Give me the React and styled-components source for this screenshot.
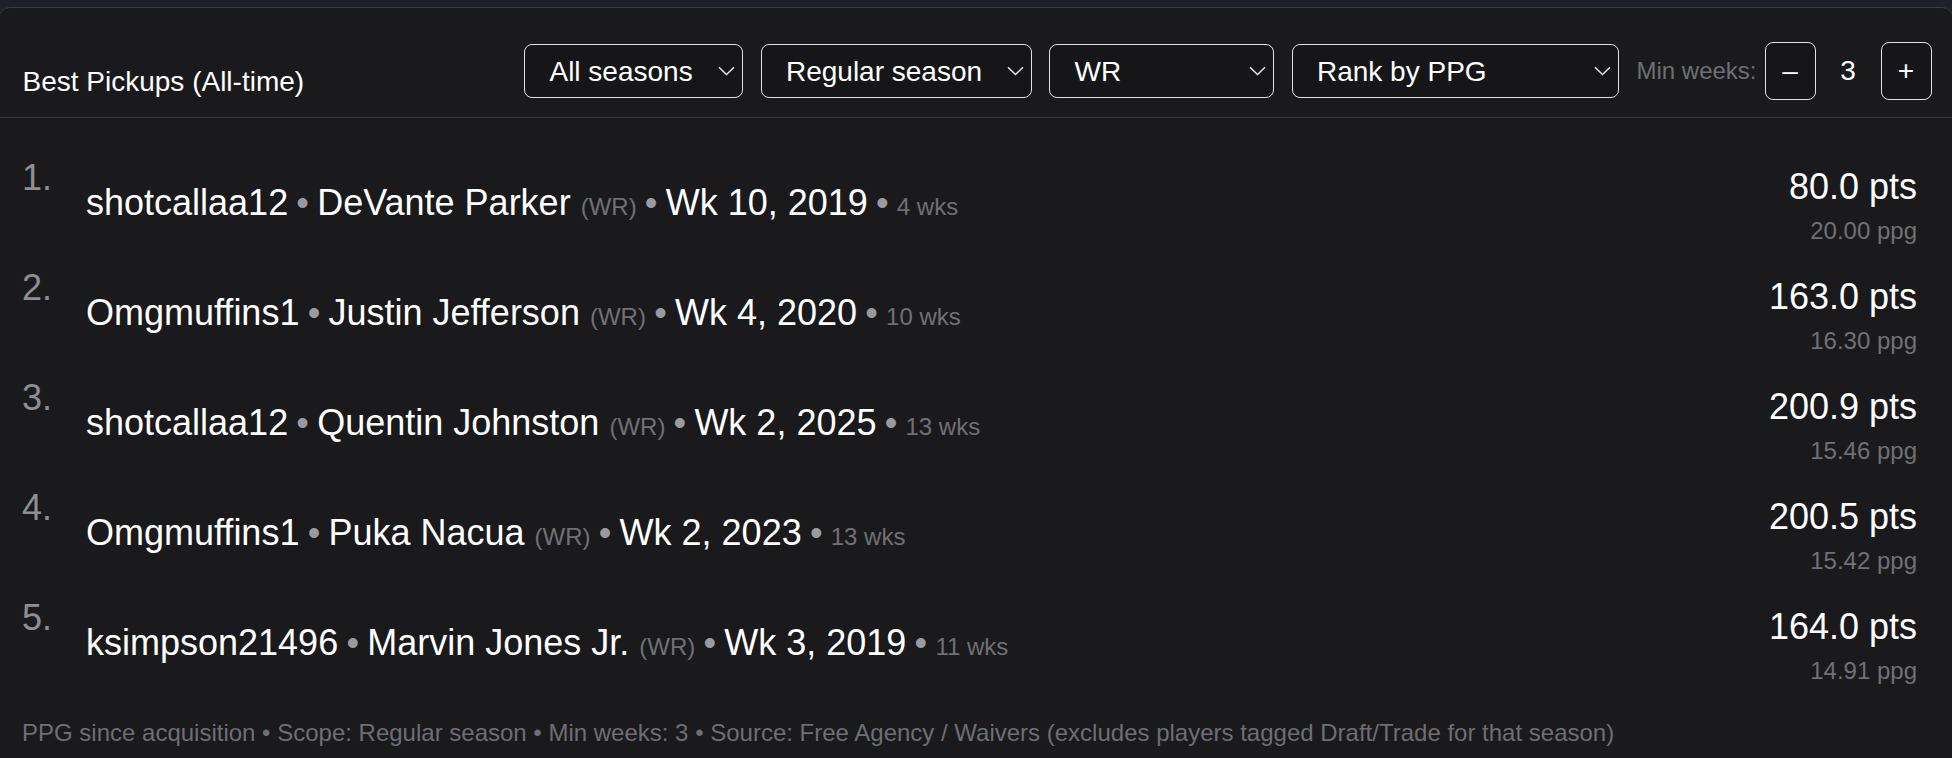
import React from "react";
import styled, { createGlobalStyle } from "styled-components";

const GlobalStyle = createGlobalStyle`
  html, body {
    margin: 0;
    padding: 0;
    height: 100%;
    overflow: hidden;
    background: #1e2129;
  }
  body {
    font-family: "Liberation Sans", Arial, sans-serif;
  }
  #root { height: 100%; }
`;

const Page = styled.div`
  padding-top: 7px;
`;

const Card = styled.section`
  margin: 0 -2px;
  min-height: 820px;
  background: #1a1a1c;
  border: 1px solid #3c3c41;
  border-radius: 12px;
  color: #ffffff;
`;

const Header = styled.header`
  display: flex;
  align-items: center;
  justify-content: space-between;
  padding: 34px 21.5px 17px 23.5px;
  border-bottom: 1px solid #3a3a3f;
`;

const Title = styled.h2`
  margin: 22px 0 0;
  font-size: 28px;
  line-height: 32px;
  font-weight: 400;
  color: #ffffff;
`;

const Controls = styled.div`
  display: flex;
  align-items: center;
  gap: 17.5px;
`;

const SelectWrap = styled.div`
  position: relative;
  width: ${(p) => p.$w}px;
`;

const Select = styled.select`
  appearance: none;
  -webkit-appearance: none;
  display: block;
  width: 100%;
  height: 54px;
  margin: 0;
  padding: 0 34px 0 24px;
  background: #161618;
  color: #ffffff;
  border: 1px solid #e2e2e2;
  border-radius: 8px;
  font-family: inherit;
  font-size: 28px;
  outline: none;
`;

const Chevron = styled.svg`
  position: absolute;
  right: 8px;
  top: 50%;
  margin-top: -5px;
  width: 17px;
  height: 10px;
  pointer-events: none;
`;

const Stepper = styled.div`
  display: flex;
  align-items: center;
  gap: 8px;
`;

const StepLabel = styled.span`
  font-size: 24px;
  color: #6e6e73;
`;

const StepButton = styled.button`
  width: 51px;
  height: 58px;
  display: flex;
  align-items: center;
  justify-content: center;
  padding: 0;
  background: #161618;
  color: #ffffff;
  border: 1px solid #e2e2e2;
  border-radius: 8px;
  font-family: inherit;
  font-size: 28px;
  cursor: pointer;
`;

const StepValue = styled.span`
  width: 49px;
  text-align: center;
  font-size: 28px;
  color: #ffffff;
`;

const List = styled.ol`
  list-style: none;
  margin: 0;
  padding: 39px 36px 0 23px;
  display: flex;
  flex-direction: column;
  gap: 18px;
`;

const Row = styled.li`
  display: grid;
  grid-template-columns: 64px 1fr auto;
  height: 92px;
`;

const Rank = styled.span`
  align-self: start;
  font-size: 36px;
  line-height: 41px;
  color: #8e8e93;
`;

const Main = styled.div`
  align-self: center;
  padding-top: 2px;
  font-size: 36px;
  line-height: 41px;
  color: #ffffff;
  white-space: nowrap;
`;

const Sep = styled.span`
  margin: 0 -1.8px;
  color: #9a9aa0;
  white-space: pre;
`;

const Meta = styled.span`
  font-size: 24px;
  color: #707075;
`;

const Score = styled.div`
  align-self: center;
  padding-top: 4px;
  text-align: right;
`;

const Pts = styled.div`
  font-size: 36px;
  line-height: 41px;
  color: #ffffff;
`;

const Ppg = styled.div`
  margin-top: 10px;
  font-size: 24px;
  line-height: 28px;
  color: #707075;
`;

const Footer = styled.p`
  margin: 30px 0 0;
  padding: 0 23px;
  font-size: 24px;
  line-height: 28px;
  color: #6e6e73;
`;

const ChevronIcon = () => (
  <Chevron viewBox="0 0 17 10" fill="none">
    <path d="M1 1.2 L8.5 8.5 L16 1.2" stroke="#e6e6e6" strokeWidth="1.5" />
  </Chevron>
);

const Dropdown = ({ width, value, options }) => (
  <SelectWrap $w={width}>
    <Select defaultValue={value}>
      {options.map((o) => (
        <option key={o}>{o}</option>
      ))}
    </Select>
    <ChevronIcon />
  </SelectWrap>
);

const rows = [
  { user: "shotcallaa12", player: "DeVante Parker", pos: "WR", wk: "Wk 10, 2019", wks: "4 wks", pts: "80.0 pts", ppg: "20.00 ppg" },
  { user: "Omgmuffins1", player: "Justin Jefferson", pos: "WR", wk: "Wk 4, 2020", wks: "10 wks", pts: "163.0 pts", ppg: "16.30 ppg" },
  { user: "shotcallaa12", player: "Quentin Johnston", pos: "WR", wk: "Wk 2, 2025", wks: "13 wks", pts: "200.9 pts", ppg: "15.46 ppg" },
  { user: "Omgmuffins1", player: "Puka Nacua", pos: "WR", wk: "Wk 2, 2023", wks: "13 wks", pts: "200.5 pts", ppg: "15.42 ppg" },
  { user: "ksimpson21496", player: "Marvin Jones Jr.", pos: "WR", wk: "Wk 3, 2019", wks: "11 wks", pts: "164.0 pts", ppg: "14.91 ppg" },
];

export default function App() {
  return (
    <>
      <GlobalStyle />
      <Page>
        <Card>
          <Header>
            <Title>Best Pickups (All-time)</Title>
            <Controls>
              <Dropdown width={219} value="All seasons" options={["All seasons", "2025", "2024", "2023"]} />
              <Dropdown width={271} value="Regular season" options={["Regular season", "Playoffs", "All games"]} />
              <Dropdown width={225} value="WR" options={["All positions", "QB", "RB", "WR", "TE"]} />
              <Dropdown width={327} value="Rank by PPG" options={["Rank by PPG", "Rank by total points"]} />
              <Stepper>
                <StepLabel>Min weeks:</StepLabel>
                <StepButton type="button">–</StepButton>
                <StepValue>3</StepValue>
                <StepButton type="button">+</StepButton>
              </Stepper>
            </Controls>
          </Header>
          <List>
            {rows.map((r, i) => (
              <Row key={i}>
                <Rank>{i + 1}.</Rank>
                <Main>
                  {r.user}
                  <Sep> • </Sep>
                  {r.player} <Meta>({r.pos})</Meta>
                  <Sep> • </Sep>
                  {r.wk}
                  <Sep> • </Sep>
                  <Meta>{r.wks}</Meta>
                </Main>
                <Score>
                  <Pts>{r.pts}</Pts>
                  <Ppg>{r.ppg}</Ppg>
                </Score>
              </Row>
            ))}
          </List>
          <Footer>
            PPG since acquisition • Scope: Regular season • Min weeks: 3 • Source: Free Agency / Waivers (excludes players tagged Draft/Trade for that season)
          </Footer>
        </Card>
      </Page>
    </>
  );
}
